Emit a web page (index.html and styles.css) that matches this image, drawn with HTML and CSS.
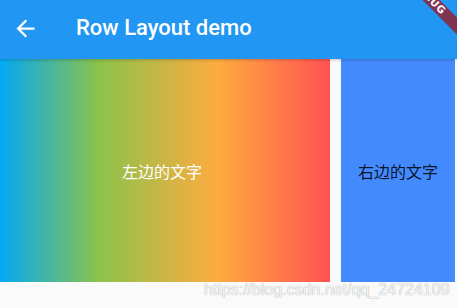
FILE: index.html
```html
<!DOCTYPE html>
<html lang="zh">
<head>
<meta charset="utf-8">
<title>Row Layout demo</title>
<link rel="stylesheet" href="styles.css">
</head>
<body>
<div class="screen">
  <header class="appbar">
    <svg class="back" viewBox="0 0 24 24" width="27" height="27" aria-hidden="true">
      <path d="M20 11H7.83l5.59-5.59L12 4l-8 8 8 8 1.41-1.41L7.83 13H20v-2z" fill="#ffffff"/>
    </svg>
    <h1 class="title">Row Layout demo</h1>
  </header>
  <main class="row">
    <div class="panel gradient"><span class="label light">左边的文字</span></div>
    <div class="panel blue"><span class="label dark">右边的文字</span></div>
  </main>
  <div class="banner">DEBUG</div>
  <div class="watermark">https://blog.csdn.net/qq_24724109</div>
</div>
</body>
</html>
```

FILE: styles.css
```css
html, body {
  margin: 0;
  padding: 0;
}
body {
  background: #fafafa;
  font-family: Roboto, "Noto Sans", "Noto Sans CJK SC", sans-serif;
}
.screen {
  position: relative;
  width: 457px;
  height: 308px;
  overflow: hidden;
  background: #fafafa;
}
.appbar {
  position: relative;
  z-index: 2;
  height: 59px;
  display: flex;
  align-items: center;
  padding-left: 12px;
  background: #2196f3;
  box-shadow: 0 1px 3px rgba(0, 0, 0, 0.22);
  box-sizing: border-box;
}
.back {
  display: block;
  flex: none;
  margin-top: -3px;
}
.title {
  margin: 0 0 0 37px;
  color: #ffffff;
  font-family: Roboto, "Noto Sans", sans-serif;
  font-weight: 500;
  font-size: 22px;
  line-height: 26px;
  margin-top: -3px;
}
.row {
  display: flex;
  height: 223px;
  padding-right: 2px;
}
.panel {
  display: flex;
  align-items: center;
  justify-content: center;
}
.gradient {
  width: 330px;
  margin-right: 11px;
  background: linear-gradient(to right, #03a9f4 0%, #8bc34a 30%, #ffab40 66%, #ff5252 100%);
}
.blue {
  width: 114px;
  background: #448aff;
}
.label {
  font-family: "Noto Sans CJK SC", sans-serif;
  font-size: 16px;
  line-height: 20px;
}
.light {
  color: #ffffff;
  margin-right: 6px;
}
.dark {
  color: rgba(0, 0, 0, 0.87);
}
.banner {
  position: absolute;
  z-index: 3;
  left: 369px;
  top: -8px;
  width: 120px;
  height: 12px;
  transform: rotate(45deg);
  background: #7f3552;
  color: #ffffff;
  font-family: "DejaVu Sans", sans-serif;
  font-weight: bold;
  font-size: 10px;
  line-height: 12px;
  text-align: center;
  letter-spacing: 0.5px;
}
.watermark {
  position: absolute;
  left: 204px;
  top: 281px;
  font-family: "Liberation Sans", Arial, sans-serif;
  font-size: 16px;
  line-height: 18px;
  color: rgba(255, 255, 255, 0.92);
  text-shadow: 0 0 1px rgba(0, 0, 0, 0.28), 0 0 1px rgba(0, 0, 0, 0.2);
}
```
